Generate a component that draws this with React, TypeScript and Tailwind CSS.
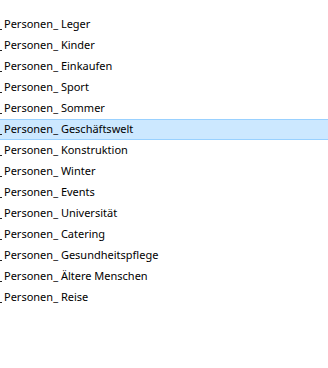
import React from "react";

const items = [
  "Leger",
  "Kinder",
  "Einkaufen",
  "Sport",
  "Sommer",
  "Geschäftswelt",
  "Konstruktion",
  "Winter",
  "Events",
  "Universität",
  "Catering",
  "Gesundheitspflege",
  "Ältere Menschen",
  "Reise",
];

export default function App() {
  return (
    <div className="w-[328px] h-[368px] bg-white overflow-hidden pt-[14px] font-['Segoe_UI','Noto_Sans',sans-serif] text-[11px] text-black">
      {items.map((name, i) => (
        <div
          key={name}
          className={
            i === 5
              ? "h-[21px] flex items-center border-y border-[#99d1ff] bg-[#cce8ff]"
              : "h-[21px] flex items-center border-y border-transparent"
          }
        >
          {/* tail of the clipped prefix */}
          <span className="w-[2px] h-px bg-[#222] translate-y-[5px]" />
          <span className="whitespace-nowrap ml-[2px]">Personen_ {name}</span>
        </div>
      ))}
    </div>
  );
}
